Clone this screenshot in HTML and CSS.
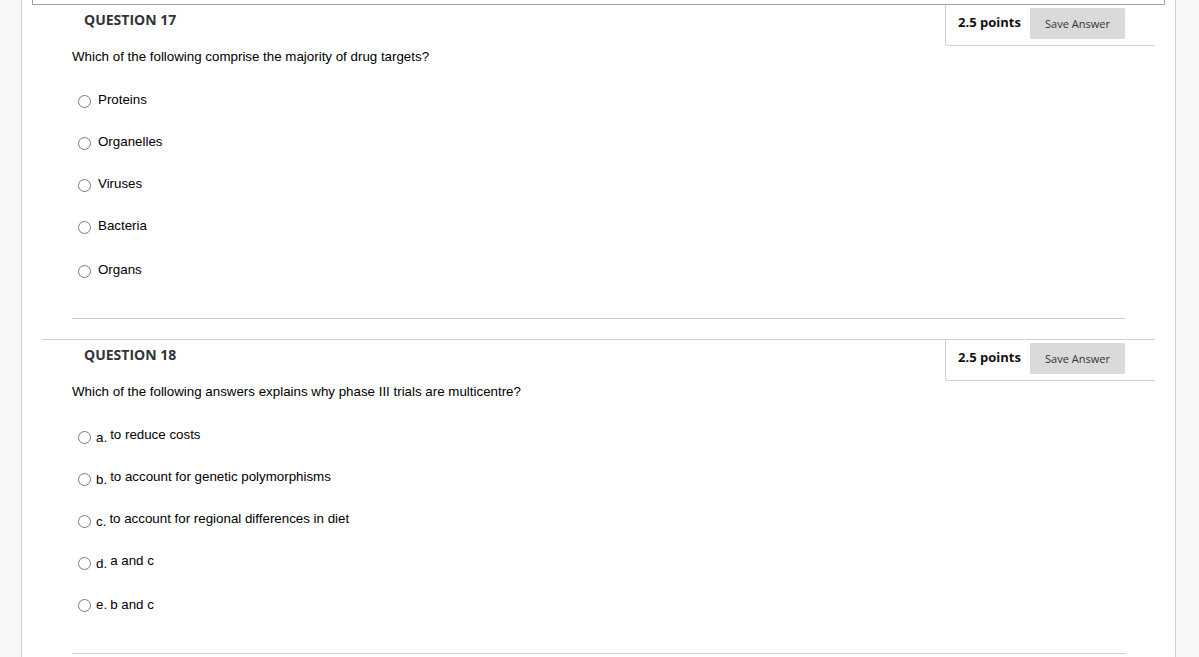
FILE: index.html
```html
<!DOCTYPE html>
<html>
<head>
<meta charset="utf-8">
<link rel="stylesheet" href="styles.css">
</head>
<body>
<div class="page">
  <div class="gutter gutter-left"></div>
  <main class="main">
    <div class="top-box"></div>

    <section class="question">
      <div class="q-header">
        <h2 class="q-title">QUESTION 17</h2>
        <div class="points-box">
          <span class="points">2.5 points</span>
          <span class="save-btn">Save Answer</span>
        </div>
      </div>
      <div class="q-body">
        <p class="q-text">Which of the following comprise the majority of drug targets?</p>
        <ul class="options">
          <li class="option"><span class="radio"></span><span class="opt-text">Proteins</span></li>
          <li class="option"><span class="radio"></span><span class="opt-text">Organelles</span></li>
          <li class="option"><span class="radio"></span><span class="opt-text">Viruses</span></li>
          <li class="option"><span class="radio"></span><span class="opt-text">Bacteria</span></li>
          <li class="option option-last"><span class="radio"></span><span class="opt-text">Organs</span></li>
        </ul>
        <div class="separator"></div>
      </div>
    </section>

    <section class="question">
      <div class="q-header q-header-bordered">
        <h2 class="q-title">QUESTION 18</h2>
        <div class="points-box">
          <span class="points">2.5 points</span>
          <span class="save-btn">Save Answer</span>
        </div>
      </div>
      <div class="q-body">
        <p class="q-text">Which of the following answers explains why phase III trials are multicentre?</p>
        <ul class="options">
          <li class="option lettered"><span class="radio"></span><span class="letter">a.</span><span class="opt-text">to reduce costs</span></li>
          <li class="option lettered"><span class="radio"></span><span class="letter">b.</span><span class="opt-text">to account for genetic polymorphisms</span></li>
          <li class="option lettered"><span class="radio"></span><span class="letter">c.</span><span class="opt-text">to account for regional differences in diet</span></li>
          <li class="option lettered"><span class="radio"></span><span class="letter">d.</span><span class="opt-text">a and c</span></li>
          <li class="option lettered option-last even"><span class="radio"></span><span class="letter">e.</span><span class="opt-text">b and c</span></li>
        </ul>
        <div class="separator"></div>
      </div>
    </section>
  </main>
  <div class="gutter gutter-right"></div>
</div>
</body>
</html>
```

FILE: styles.css
```css
html, body {
  margin: 0;
  padding: 0;
  height: 100%;
  overflow: hidden;
  background: #ffffff;
}

.page {
  display: flex;
  min-height: 100vh;
  font-family: "Liberation Sans", Arial, sans-serif;
  color: #000;
}

.gutter {
  flex: none;
  background: #f7f7f7;
}

.gutter-left {
  width: 21px;
  border-right: 1px solid #cfcfcf;
}

.gutter-right {
  width: 23px;
  border-left: 1px solid #cfcfcf;
}

.main {
  width: 1153px;
  flex: none;
  background: #fff;
}

.top-box {
  margin-left: 10px;
  width: 1133px;
  box-sizing: border-box;
  height: 5px;
  border: 1px solid #a3a3a3;
  border-top: none;
}

.q-header {
  margin-left: 20px;
  width: 1113px;
  display: flex;
  align-items: flex-start;
  justify-content: space-between;
}

.q-header-bordered {
  border-top: 1px solid #d0d0d0;
}

.q-title {
  margin: 0;
  padding: 5px 0 0 42px;
  font-family: "Open Sans", sans-serif;
  font-weight: 700;
  font-size: 14px;
  line-height: 20px;
  color: #333;
}

.points-box {
  width: 210px;
  height: 41px;
  box-sizing: border-box;
  border-left: 1px solid #d0d0d0;
  border-bottom: 1px solid #d0d0d0;
  border-bottom-left-radius: 3px;
  padding: 3px 30px 0 12px;
  display: flex;
  align-items: flex-start;
  justify-content: space-between;
}

.points {
  font-family: "Open Sans", sans-serif;
  font-weight: 700;
  font-size: 13px;
  line-height: 18px;
  padding-top: 5px;
  color: #111;
}

.save-btn {
  width: 95px;
  height: 31px;
  background: #dadada;
  font-family: "Open Sans", sans-serif;
  font-size: 11px;
  color: #333;
  display: flex;
  align-items: center;
  justify-content: center;
  border-radius: 1px;
}

.q-body {
  padding-left: 50px;
}

.q-text {
  margin: 3px 0 0 0;
  font-size: 13.33px;
  line-height: 15px;
}

.options {
  list-style: none;
  margin: 14px 0 0 0;
  padding: 0 0 0 6px;
}

.option {
  height: 42px;
  display: flex;
  align-items: center;
  font-size: 13.33px;
  line-height: 15px;
}

.option-last {
  margin-top: 2px;
}

.radio {
  flex: none;
  width: 13px;
  height: 13px;
  box-sizing: border-box;
  border: 1px solid #7a7a7a;
  border-radius: 50%;
  background: #fff;
  margin-top: 5px;
  margin-right: 7px;
}

.lettered .radio {
  margin-right: 5px;
  margin-top: 7px;
}

.letter {
  margin-top: 7px;
  margin-right: 3px;
}

.lettered.even .letter {
  margin-top: 0;
}

.lettered.even .radio {
  margin-top: 3px;
}

.separator {
  margin: 28px 0 20px 0;
  width: 1053px;
  height: 1px;
  background: #d0d0d0;
}
```
